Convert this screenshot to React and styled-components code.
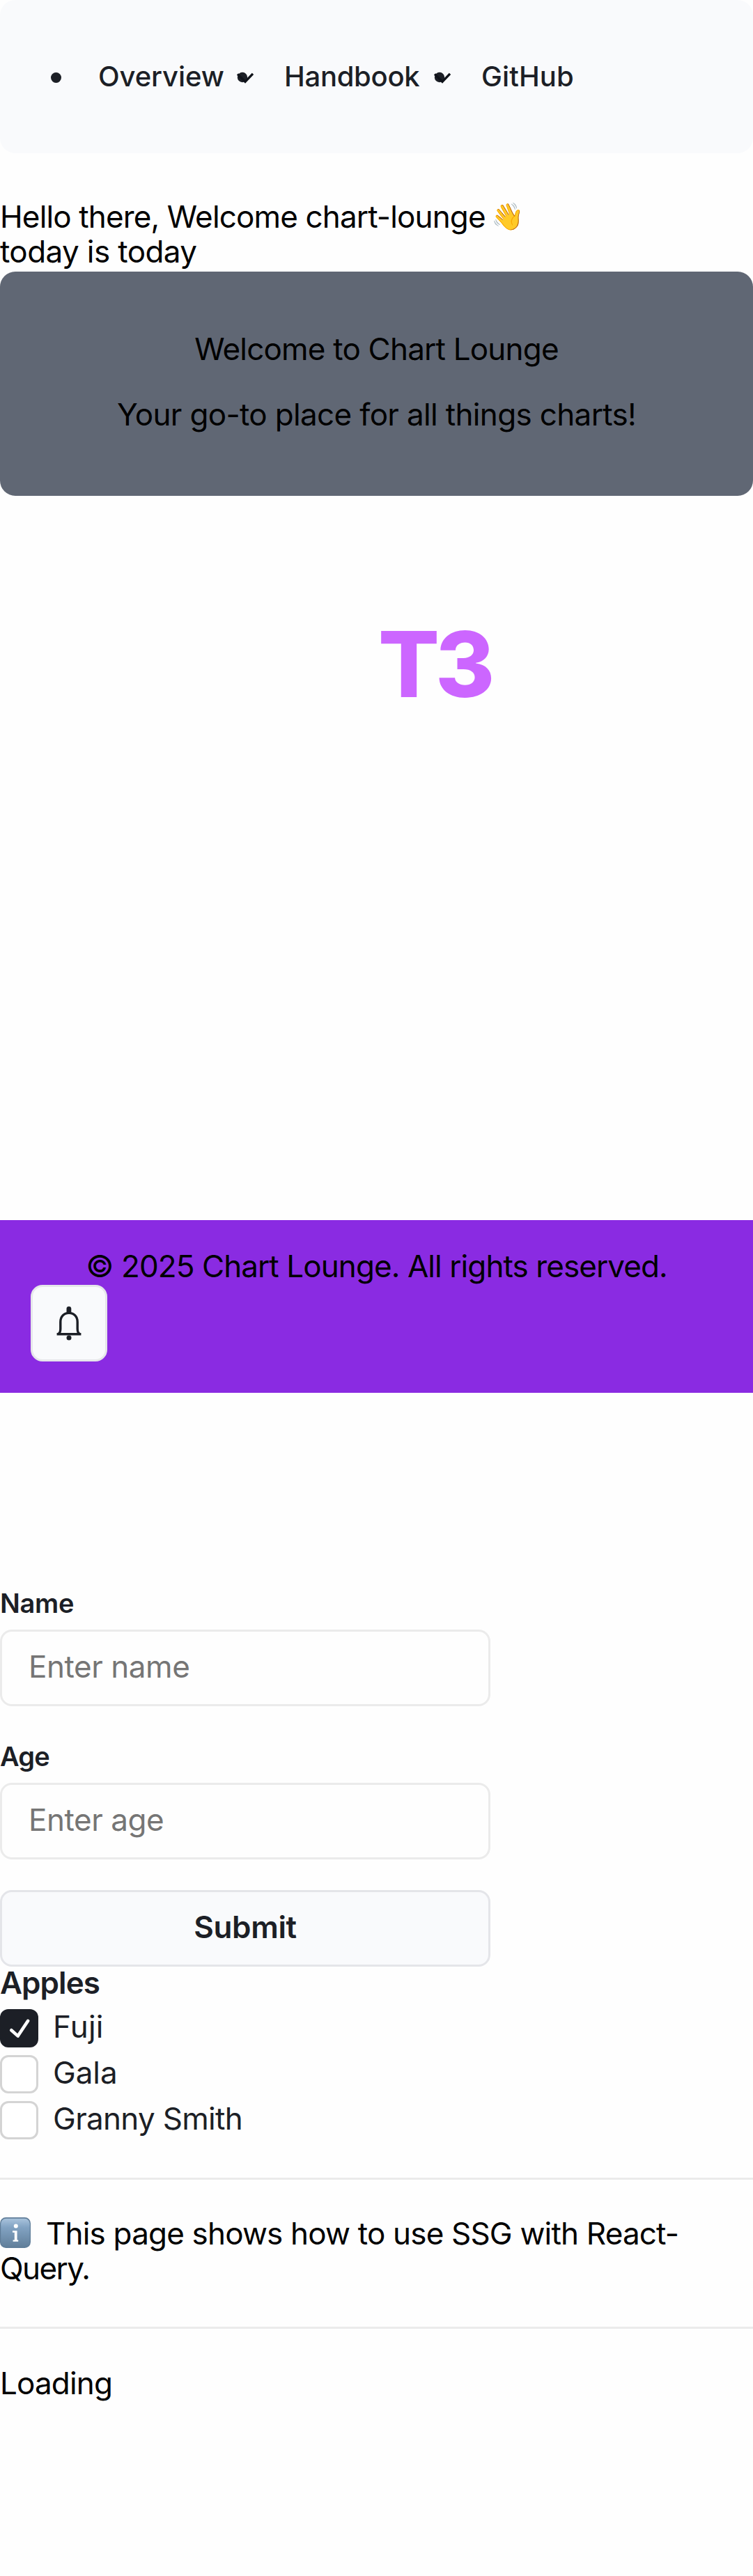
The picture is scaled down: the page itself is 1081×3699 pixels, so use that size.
import React from "react";
import styled, { createGlobalStyle } from "styled-components";

const ink = "#1c1f26";
const surface = "#f9fafc";
const line = "#ebebeb";

const GlobalStyle = createGlobalStyle`
  *, *::before, *::after { box-sizing: border-box; }
  body {
    margin: 0;
    background: #fefefe;
    color: #000;
    font-family: Inter, "Liberation Sans", sans-serif;
    font-size: 44px;
    line-height: 50px;
  }
  p, ul, h1, h2, form, fieldset { margin: 0; padding: 0; border: 0; font: inherit; }
`;

const Page = styled.div`
  display: flex;
  flex-direction: column;
  width: 1081px;
  height: 3699px;
`;

const Text = styled.p`
  letter-spacing: ${(p) => p.$track || 0}px;
  white-space: nowrap;
`;

const NavBar = styled.nav`
  display: flex;
  align-items: center;
  height: 220px;
  padding: 0 0 1px 73px;
  border-radius: 22px;
  background: ${surface};
  color: ${ink};
  font-size: 40px;
  font-weight: 500;
`;

const Bullet = styled.span`
  width: 15px;
  height: 15px;
  margin: 3px 53px 0 0;
  border-radius: 50%;
  background: ${ink};
`;

const NavList = styled.ul`
  display: flex;
  gap: 44px;
  list-style: none;
`;

const NavItem = styled.li`
  display: flex;
  align-items: center;
  gap: 17px;
`;

const NavLabel = styled.span`
  width: ${(p) => p.$width}px;
  letter-spacing: ${(p) => p.$track}px;
  white-space: nowrap;
`;

const Caret = styled.svg`
  display: block;
  width: 24px;
  height: 18px;
  margin-top: 3px;
`;

const Greeting = styled.section`
  height: 170px;
  padding-top: 66px;
`;

const GreetingLine = styled.div`
  display: flex;
  gap: 9px;
  height: 50px;
`;

const Wave = styled.span`
  font-family: "Noto Color Emoji", Inter, sans-serif;
  font-size: 38px;
`;

const Hero = styled.section`
  display: flex;
  flex-direction: column;
  align-items: center;
  gap: 44px;
  height: 322px;
  padding-top: 86px;
  border-radius: 22px;
  background: #606774;
`;

const Showcase = styled.section`
  height: 1040px;
  padding: 177px 0 0 543px;
`;

const Brand = styled.h1`
  color: #cc66ff;
  font-size: 130px;
  font-weight: 800;
  line-height: 130px;
  letter-spacing: -6px;
`;

const Footer = styled.footer`
  display: flex;
  flex-direction: column;
  gap: 2px;
  height: 248px;
  padding: 41px 44px 0;
  background: #8a2be2;
`;

const Copyright = styled(Text)`
  text-align: center;
`;

const IconButton = styled.button`
  display: flex;
  width: 110px;
  height: 110px;
  padding: 0;
  border: 3px solid #e6e7ea;
  border-radius: 17px;
  background: ${surface};
  color: ${ink};
`;

const Form = styled.form`
  width: 704px;
  padding-top: 280px;
  color: ${ink};
`;

const Field = styled.label`
  display: block;
  height: 220px;
`;

const FieldLabel = styled.span`
  display: block;
  height: 60px;
  font-size: 38px;
  font-weight: 600;
  line-height: 44px;
  letter-spacing: ${(p) => p.$track}px;
`;

const Input = styled.input`
  display: block;
  width: 704px;
  height: 110px;
  padding: 0 37px 4px 38px;
  border: 3px solid ${line};
  border-radius: 17px;
  outline: none;
  background: transparent;
  color: ${ink};
  font: inherit;
  font-size: 44px;
  letter-spacing: -0.45px;
  &::placeholder { color: #757575; opacity: 1; }
`;

const Submit = styled.button`
  display: block;
  width: 704px;
  height: 110px;
  margin-top: -6px;
  padding: 0 0 4px;
  border: 3px solid #e4e5e9;
  border-radius: 17px;
  background: ${surface};
  color: ${ink};
  font: inherit;
  font-weight: 600;
  letter-spacing: -0.4px;
`;

const Group = styled.fieldset`
  min-width: 0;
  margin-top: -2px;
  color: ${ink};
`;

const GroupTitle = styled.h2`
  height: 62px;
  font-weight: 600;
  letter-spacing: -0.95px;
`;

const Option = styled.label`
  display: flex;
  align-items: flex-start;
  gap: 21px;
  height: 66px;
`;

const Box = styled.span`
  display: flex;
  width: 55px;
  height: 55px;
  margin-top: ${(p) => (p.$checked ? 0.5 : 1)}px;
  border: ${(p) => (p.$checked ? "0" : "3px solid #d4d4d4")};
  border-radius: 12px;
  background: ${(p) => (p.$checked ? ink : "#fff")};
`;

const OptionText = styled.span`
  margin-top: 1px;
  letter-spacing: ${(p) => p.$track}px;
`;

const Divider = styled.hr`
  width: 100%;
  height: 3px;
  margin: ${(p) => p.$top}px 0 0;
  border: 0;
  background: ${line};
`;

const Note = styled.section`
  height: 155px;
  margin-top: 52px;
`;

const NoteLine = styled.div`
  display: flex;
  gap: 22px;
`;

const InfoIcon = styled.svg`
  display: block;
  width: 44px;
  height: 44px;
  margin-top: 2px;
`;

const Status = styled(Text)`
  margin-top: 53px;
`;

const navItems = [
  { label: "Overview", width: 182, track: -0.1, menu: true },
  { label: "Handbook", width: 198, track: -0.3, menu: true },
  { label: "GitHub", width: 134, track: 0.1, menu: false },
];

const apples = [
  { label: "Fuji", track: 0.2, checked: true },
  { label: "Gala", track: -0.1, checked: false },
  { label: "Granny Smith", track: -0.7, checked: false },
];

function MenuCaret() {
  return (
    <Caret viewBox="0 0 24 18">
      <circle cx="8" cy="9" r="7.2" fill={ink} />
      <path d="M1 4.5 12 15.3 23 3.8" fill="none" stroke="#0f1219" strokeWidth="3.3" />
    </Caret>
  );
}

function Bell() {
  return (
    <svg width="104" height="104" viewBox="3 3 104 104" fill="none" stroke="currentColor" strokeWidth="3.4">
      <path d="M54.9 34.4v4" strokeWidth="6.8" strokeLinecap="round" />
      <path d="M39.6 70.3c2.4-.8 3.2-3.2 3.2-7.3V53.2c0-7.6 5-12.8 12.2-12.8s12.2 5.2 12.2 12.8V63c0 4.1.8 6.5 3.2 7.3" />
      <path d="M37.6 70.7h34.8" />
      <circle cx="55" cy="76" r="3.5" fill="currentColor" stroke="none" />
    </svg>
  );
}

function Check() {
  return (
    <svg width="55" height="55" viewBox="0 0 55 55">
      <path d="M16.3 30.2 25.7 38.6 40.2 16.8" fill="none" stroke="#fff" strokeWidth="4.6" strokeLinecap="round" strokeLinejoin="round" />
    </svg>
  );
}

function Info() {
  return (
    <InfoIcon viewBox="0 0 44 44">
      <defs>
        <linearGradient id="infoFill" x1="0" y1="0" x2="0" y2="1">
          <stop offset="0" stopColor="#a9c3dc" />
          <stop offset="0.3" stopColor="#82a3c3" />
          <stop offset="1" stopColor="#617f9a" />
        </linearGradient>
      </defs>
      <rect width="44" height="44" rx="8.5" fill="#5f7d99" />
      <rect x="1.2" y="1.8" width="41.6" height="41" rx="7.5" fill="url(#infoFill)" />
      <circle cx="22.8" cy="12.6" r="3" fill="#fff" />
      <path d="M18 19.3h6.6v13.3h1.6v2.2h-7.6v-2.2h2.2V21.8H18z" fill="#fff" />
    </InfoIcon>
  );
}

export default function App() {
  return (
    <Page>
      <GlobalStyle />
      <NavBar>
        <Bullet />
        <NavList>
          {navItems.map((item) => (
            <NavItem key={item.label}>
              <NavLabel $width={item.width} $track={item.track}>{item.label}</NavLabel>
              {item.menu && <MenuCaret />}
            </NavItem>
          ))}
        </NavList>
      </NavBar>

      <Greeting>
        <GreetingLine>
          <Text $track={-0.86}>Hello there, Welcome chart-lounge</Text>
          <Wave>👋</Wave>
        </GreetingLine>
        <Text $track={-0.6}>today is today</Text>
      </Greeting>

      <Hero>
        <Text $track={-0.8}>Welcome to Chart Lounge</Text>
        <Text $track={-0.66}>Your go-to place for all things charts!</Text>
      </Hero>

      <Showcase>
        <Brand>T3</Brand>
      </Showcase>

      <Footer>
        <Copyright $track={-0.92}>© 2025 Chart Lounge. All rights reserved.</Copyright>
        <IconButton type="button" aria-label="Notifications">
          <Bell />
        </IconButton>
      </Footer>

      <Form>
        <Field>
          <FieldLabel $track={-0.3}>Name</FieldLabel>
          <Input placeholder="Enter name" />
        </Field>
        <Field>
          <FieldLabel $track={-0.8}>Age</FieldLabel>
          <Input placeholder="Enter age" />
        </Field>
        <Submit type="button">Submit</Submit>
        <Group>
          <GroupTitle>Apples</GroupTitle>
          {apples.map((apple) => (
            <Option key={apple.label}>
              <Box $checked={apple.checked}>{apple.checked && <Check />}</Box>
              <OptionText $track={apple.track}>{apple.label}</OptionText>
            </Option>
          ))}
        </Group>
      </Form>

      <Divider $top={45} />
      <Note>
        <NoteLine>
          <Info />
          <Text $track={-0.82}>This page shows how to use SSG with React-</Text>
        </NoteLine>
        <Text $track={-1.6}>Query.</Text>
      </Note>
      <Divider $top={4} />
      <Status $track={-0.85}>Loading</Status>
    </Page>
  );
}
